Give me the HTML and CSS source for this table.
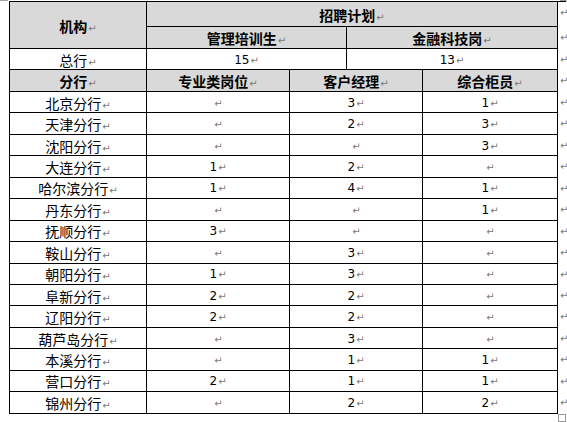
FILE: index.html
```html
<!DOCTYPE html>
<html lang="zh">
<head>
<meta charset="utf-8">
<title>招聘计划</title>
<link rel="stylesheet" href="styles.css">
</head>
<body>
<div class="page">
  <span class="corner corner-tl"></span>
  <span class="corner corner-tr"></span>
  <table class="plan">
    <colgroup>
      <col class="c1"><col class="c2"><col class="c3"><col class="c4"><col class="c5"><col class="c6">
    </colgroup>
    <tr class="r1">
      <td class="hd" rowspan="2">机构<span class="pm">↵</span></td>
      <td class="hd" colspan="4">招聘计划<span class="pm">↵</span></td>
      <td class="eor"><span class="pm">↵</span></td>
    </tr>
    <tr class="r2">
      <td class="hd" colspan="2">管理培训生<span class="pm">↵</span></td>
      <td class="hd" colspan="2">金融科技岗<span class="pm">↵</span></td>
      <td class="eor"><span class="pm">↵</span></td>
    </tr>
    <tr class="r3">
      <td class="nm">总行<span class="pm">↵</span></td>
      <td class="num" colspan="2">15<span class="pm">↵</span></td>
      <td class="num" colspan="2">13<span class="pm">↵</span></td>
      <td class="eor"><span class="pm">↵</span></td>
    </tr>
    <tr class="r4">
      <td class="hd">分行<span class="pm">↵</span></td>
      <td class="hd">专业类岗位<span class="pm">↵</span></td>
      <td class="hd" colspan="2">客户经理<span class="pm">↵</span></td>
      <td class="hd">综合柜员<span class="pm">↵</span></td>
      <td class="eor"><span class="pm">↵</span></td>
    </tr>
    <tr class="row"><td class="nm">北京分行<span class="pm">↵</span></td><td class="num"><span class="pm">↵</span></td><td class="num" colspan="2">3<span class="pm">↵</span></td><td class="num">1<span class="pm">↵</span></td><td class="eor"><span class="pm">↵</span></td></tr>
    <tr class="row"><td class="nm">天津分行<span class="pm">↵</span></td><td class="num"><span class="pm">↵</span></td><td class="num" colspan="2">2<span class="pm">↵</span></td><td class="num">3<span class="pm">↵</span></td><td class="eor"><span class="pm">↵</span></td></tr>
    <tr class="row"><td class="nm">沈阳分行<span class="pm">↵</span></td><td class="num"><span class="pm">↵</span></td><td class="num" colspan="2"><span class="pm">↵</span></td><td class="num">3<span class="pm">↵</span></td><td class="eor"><span class="pm">↵</span></td></tr>
    <tr class="row"><td class="nm">大连分行<span class="pm">↵</span></td><td class="num">1<span class="pm">↵</span></td><td class="num" colspan="2">2<span class="pm">↵</span></td><td class="num"><span class="pm">↵</span></td><td class="eor"><span class="pm">↵</span></td></tr>
    <tr class="row"><td class="nm">哈尔滨分行<span class="pm">↵</span></td><td class="num">1<span class="pm">↵</span></td><td class="num" colspan="2">4<span class="pm">↵</span></td><td class="num">1<span class="pm">↵</span></td><td class="eor"><span class="pm">↵</span></td></tr>
    <tr class="row"><td class="nm">丹东分行<span class="pm">↵</span></td><td class="num"><span class="pm">↵</span></td><td class="num" colspan="2"><span class="pm">↵</span></td><td class="num">1<span class="pm">↵</span></td><td class="eor"><span class="pm">↵</span></td></tr>
    <tr class="row"><td class="nm">抚顺分行<span class="pm">↵</span></td><td class="num">3<span class="pm">↵</span></td><td class="num" colspan="2"><span class="pm">↵</span></td><td class="num"><span class="pm">↵</span></td><td class="eor"><span class="pm">↵</span></td></tr>
    <tr class="row"><td class="nm">鞍山分行<span class="pm">↵</span></td><td class="num"><span class="pm">↵</span></td><td class="num" colspan="2">3<span class="pm">↵</span></td><td class="num"><span class="pm">↵</span></td><td class="eor"><span class="pm">↵</span></td></tr>
    <tr class="row"><td class="nm">朝阳分行<span class="pm">↵</span></td><td class="num">1<span class="pm">↵</span></td><td class="num" colspan="2">3<span class="pm">↵</span></td><td class="num"><span class="pm">↵</span></td><td class="eor"><span class="pm">↵</span></td></tr>
    <tr class="row"><td class="nm">阜新分行<span class="pm">↵</span></td><td class="num">2<span class="pm">↵</span></td><td class="num" colspan="2">2<span class="pm">↵</span></td><td class="num"><span class="pm">↵</span></td><td class="eor"><span class="pm">↵</span></td></tr>
    <tr class="row"><td class="nm">辽阳分行<span class="pm">↵</span></td><td class="num">2<span class="pm">↵</span></td><td class="num" colspan="2">2<span class="pm">↵</span></td><td class="num"><span class="pm">↵</span></td><td class="eor"><span class="pm">↵</span></td></tr>
    <tr class="row"><td class="nm">葫芦岛分行<span class="pm">↵</span></td><td class="num"><span class="pm">↵</span></td><td class="num" colspan="2">3<span class="pm">↵</span></td><td class="num"><span class="pm">↵</span></td><td class="eor"><span class="pm">↵</span></td></tr>
    <tr class="row"><td class="nm">本溪分行<span class="pm">↵</span></td><td class="num"><span class="pm">↵</span></td><td class="num" colspan="2">1<span class="pm">↵</span></td><td class="num">1<span class="pm">↵</span></td><td class="eor"><span class="pm">↵</span></td></tr>
    <tr class="row"><td class="nm">营口分行<span class="pm">↵</span></td><td class="num">2<span class="pm">↵</span></td><td class="num" colspan="2">1<span class="pm">↵</span></td><td class="num">1<span class="pm">↵</span></td><td class="eor"><span class="pm">↵</span></td></tr>
    <tr class="row"><td class="nm">锦州分行<span class="pm">↵</span></td><td class="num"><span class="pm">↵</span></td><td class="num" colspan="2">2<span class="pm">↵</span></td><td class="num">2<span class="pm">↵</span></td><td class="eor"><span class="pm">↵</span></td></tr>
  </table>
  <div class="handle-row"><span class="handle"></span></div>
</div>
</body>
</html>
```

FILE: styles.css
```css
html, body {
  margin: 0;
  padding: 0;
  background: #ffffff;
}

.page {
  position: relative;
  width: 567px;
  height: 422px;
  padding: 1px 0 0 9px;
  box-sizing: border-box;
  overflow: hidden;
}

.corner {
  position: absolute;
  top: 0;
  height: 1px;
  background: #a0a0a0;
}
.corner-tl { left: 0; width: 8px; }
.corner-tr { left: 560px; width: 7px; }

.plan {
  border-collapse: separate;
  border-spacing: 0;
  table-layout: fixed;
  width: 557px;
  border-top: 1px solid #000;
  border-left: 1px solid #000;
  font-family: "Noto Sans CJK SC", "DejaVu Sans", sans-serif;
  font-size: 14px;
  color: #000;
}

.c1 { width: 137px; }
.c2 { width: 143px; }
.c3 { width: 57px; }
.c4 { width: 76px; }
.c5 { width: 135px; }
.c6 { width: 8px; }

.plan td {
  padding: 1px 0 0 0;
  border-right: 1px solid #000;
  border-bottom: 1px solid #000;
  text-align: center;
  vertical-align: middle;
  line-height: 14px;
  white-space: nowrap;
  overflow: hidden;
}

.plan td.eor {
  border: none;
  text-align: left;
  padding: 3px 0 0 1px;
  vertical-align: top;
  line-height: 10px;
  overflow: visible;
}

.r1 { height: 25px; }
.r2 { height: 22px; }
.r3 { height: 21px; }
.r4 { height: 22px; }
.row { height: 21.45px; }

.plan td.hd {
  background: #d9d9d9;
  font-weight: bold;
}

.plan td.num {
  font-family: "DejaVu Sans", "Liberation Sans", sans-serif;
  font-size: 12px;
}

.pm {
  font-family: "DejaVu Sans", sans-serif;
  font-size: 10px;
  line-height: 0;
  font-weight: normal;
  color: #7a7a7a;
  margin-left: 1px;
}

.handle-row {
  display: flex;
  justify-content: flex-end;
  padding-right: 1px;
}

.handle {
  width: 6px;
  height: 6px;
  border: 1px solid #9a9a9a;
}
```
